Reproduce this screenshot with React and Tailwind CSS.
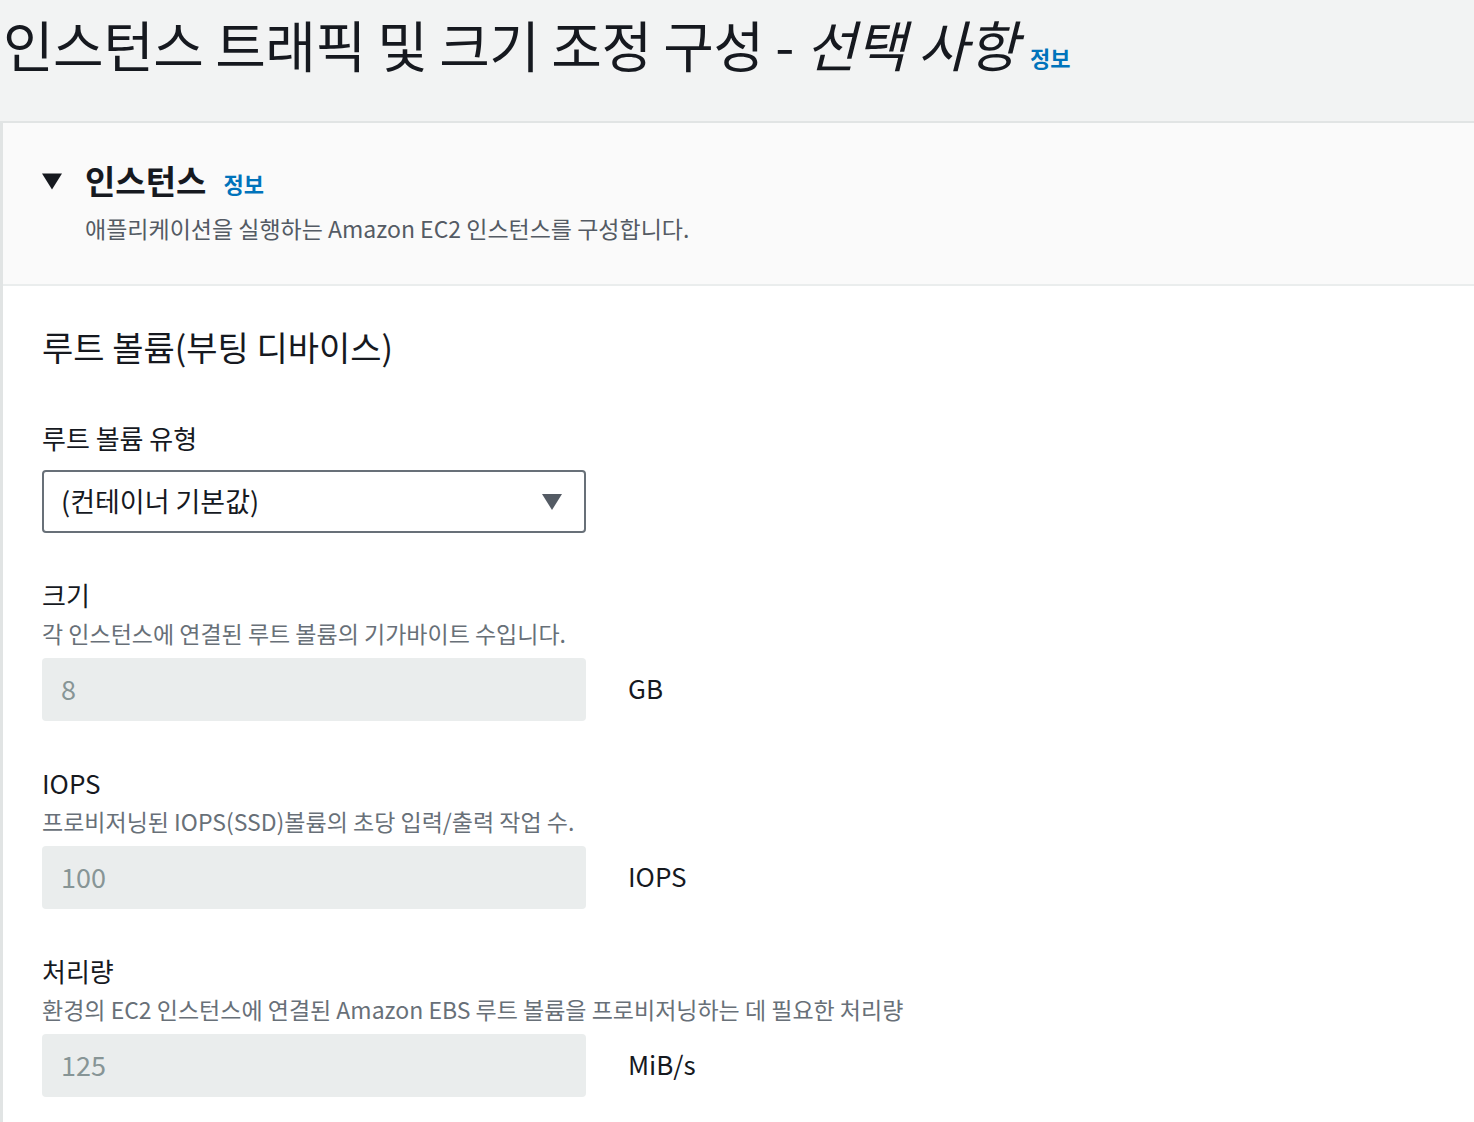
const FONT = { fontFamily: '"Noto Sans CJK KR", "Noto Sans", sans-serif' };

function Info({ className = '' }) {
  return (
    <a href="#" className={`font-bold text-[#0073bb] ${className}`}>
      정보
    </a>
  );
}

function Caret({ className = '' }) {
  return (
    <svg className={className} viewBox="0 0 20 16" fill="currentColor">
      <path d="M0 0h20L10 16z" />
    </svg>
  );
}

function NumberField({ label, desc, value, unit }) {
  return (
    <div className="mt-[46px]">
      <div className="text-[26px] leading-[32px] text-[#16191f]">{label}</div>
      <div className="mt-[8px] text-[23px] leading-[28px] text-[#687078]">{desc}</div>
      <div className="mt-[11px] flex items-center">
        <div className="w-[544px] h-[63px] rounded-[4px] bg-[#eaeded] pl-[19px] flex items-center text-[27px] text-[#879596]">
          {value}
        </div>
        <div className="ml-[42px] mb-[4px] text-[26px] text-[#16191f]">{unit}</div>
      </div>
    </div>
  );
}

export default function App() {
  return (
    <div style={FONT} className="min-h-screen bg-white">
      {/* page header */}
      <div className="h-[121px] bg-[#f2f3f3] pt-[12px] pl-[3px]">
        <h1 className="text-[55px] leading-[62px] text-[#16191f] tracking-[-0.5px] whitespace-nowrap">
          인스턴스 트래픽 및 크기 조정 구성 - <span className="italic">선택 사항</span>
          <Info className="ml-[12px] text-[22px] tracking-normal" />
        </h1>
      </div>

      {/* panel */}
      <div className="border-t-2 border-l-[3px] border-[#e1e4e4]">
        <div className="bg-[#fafafa] border-b-2 border-[#eaeded] pl-[39px] pt-[40px] pb-[42px]">
          <div className="flex items-center h-[36px]">
            <Caret className="w-[20px] h-[17px] text-[#16191f]" />
            <h2 className="ml-[23px] text-[33px] font-bold text-[#16191f]">인스턴스</h2>
            <Info className="ml-[17px] mt-[4px] text-[22px]" />
          </div>
          <p className="mt-[15px] ml-[43px] text-[23px] leading-[28px] text-[#545b64]">
            애플리케이션을 실행하는 Amazon EC2 인스턴스를 구성합니다.
          </p>
        </div>

        <div className="pl-[39px] pt-[41px] pb-[40px]">
          <h3 className="text-[34px] leading-[40px] text-[#16191f]">루트 볼륨(부팅 디바이스)</h3>

          <div className="mt-[55px]">
            <div className="text-[26px] leading-[32px] text-[#16191f]">루트 볼륨 유형</div>
            <div className="mt-[16px] w-[544px] h-[63px] rounded-[4px] border-2 border-[#687078] bg-white flex items-center justify-between pl-[17px] pr-[22px]">
              <span className="text-[27px] text-[#16191f]">(컨테이너 기본값)</span>
              <Caret className="w-[20px] h-[16px] text-[#545b64]" />
            </div>
          </div>

          <NumberField label="크기" desc="각 인스턴스에 연결된 루트 볼륨의 기가바이트 수입니다." value="8" unit="GB" />
          <NumberField
            label="IOPS"
            desc="프로비저닝된 IOPS(SSD)볼륨의 초당 입력/출력 작업 수."
            value="100"
            unit="IOPS"
          />
          <NumberField
            label="처리량"
            desc="환경의 EC2 인스턴스에 연결된 Amazon EBS 루트 볼륨을 프로비저닝하는 데 필요한 처리량"
            value="125"
            unit="MiB/s"
          />
        </div>
      </div>
    </div>
  );
}
